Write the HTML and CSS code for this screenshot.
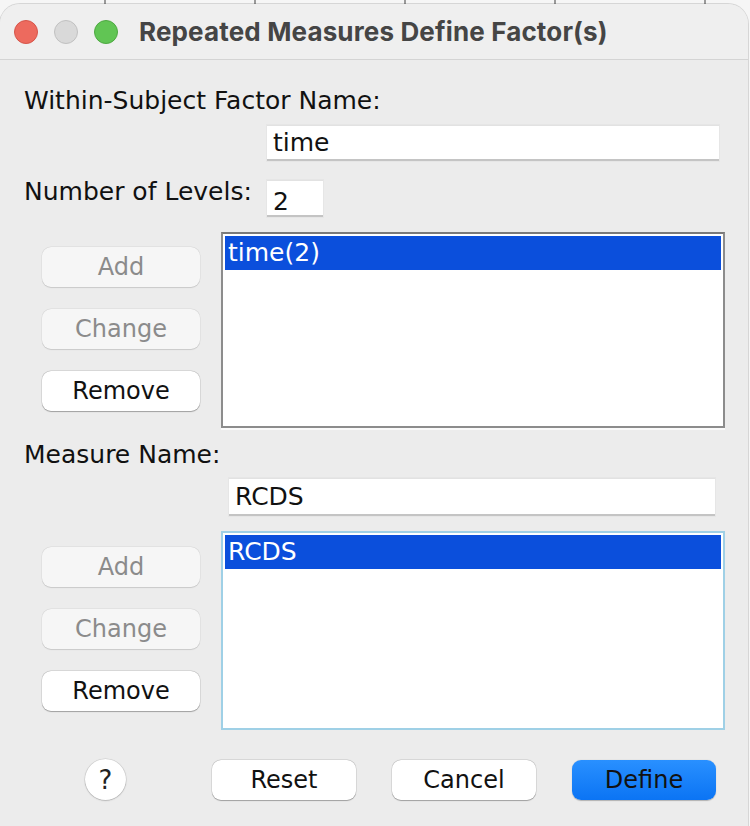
FILE: index.html
```html
<!DOCTYPE html>
<html>
<head>
<meta charset="utf-8">
<link rel="stylesheet" href="styles.css">
</head>
<body>
<div class="window">
  <div class="titlebar">
    <span class="light red"></span>
    <span class="light grey"></span>
    <span class="light green"></span>
    <span class="title">Repeated Measures Define Factor(s)</span>
  </div>
  <div class="content">
    <div class="label l1">Within-Subject Factor Name:</div>
    <div class="field f-factor">time</div>
    <div class="levels-row">
      <div class="label levels-label">Number of Levels:</div>
      <div class="field f-levels">2</div>
    </div>
    <div class="section s1">
      <div class="btn-col">
        <div class="btn disabled">Add</div>
        <div class="btn disabled">Change</div>
        <div class="btn">Remove</div>
      </div>
      <div class="list list-grey">
        <div class="row-sel">time(2)</div>
      </div>
    </div>
    <div class="label l2">Measure Name:</div>
    <div class="field f-measure">RCDS</div>
    <div class="section s2">
      <div class="btn-col">
        <div class="btn disabled">Add</div>
        <div class="btn disabled">Change</div>
        <div class="btn">Remove</div>
      </div>
      <div class="list list-blue">
        <div class="row-sel">RCDS</div>
      </div>
    </div>
    <div class="bottom">
      <div class="help">?</div>
      <div class="btn wide b-reset">Reset</div>
      <div class="btn wide">Cancel</div>
      <div class="btn wide primary">Define</div>
    </div>
  </div>
</div>
</body>
</html>
```
FILE: styles.css
```css
html, body {
  margin: 0;
  padding: 0;
}
body {
  width: 750px;
  height: 826px;
  overflow: hidden;
  background-color: #f6f6f6;
  background-image: repeating-linear-gradient(90deg, transparent 0, transparent 104px, #9a9a9a 104px, #9a9a9a 106px, transparent 106px, transparent 150px);
  background-size: 750px 6px;
  background-repeat: no-repeat;
  font-family: "DejaVu Sans", sans-serif;
}
.window {
  margin-top: 4px;
  width: 748px;
  height: 822px;
  background: #ececec;
  border-radius: 20px 20px 0 0;
  box-shadow: 0 0 0 1px rgba(0,0,0,0.13);
  overflow: hidden;
}
.titlebar {
  height: 55px;
  background: #efefef;
  border-bottom: 1px solid #d4d4d4;
  display: flex;
  align-items: center;
  padding-left: 14px;
}
.light {
  width: 24px;
  height: 24px;
  border-radius: 50%;
  box-sizing: border-box;
  margin-right: 16px;
}
.red { background: #ed6a5e; border: 1px solid #d5554a; }
.grey { background: #d9d9d9; border: 1px solid #c0c0c0; }
.green { background: #61c554; border: 1px solid #4ea842; margin-right: 21px; }
.title {
  font-family: "Inter", "Liberation Sans", sans-serif;
  font-weight: 700;
  font-size: 26px;
  color: #454545;
  letter-spacing: 0.15px;
}
.content {
  padding-left: 24px;
}
.label {
  font-size: 25px;
  line-height: 30px;
  color: #111;
  white-space: nowrap;
}
.l1 { margin-top: 26px; }
.field {
  background: #fff;
  box-sizing: border-box;
  font-size: 25px;
  color: #111;
  padding-left: 6px;
  border-top: 1px solid #e2e2e2;
  border-bottom: 2px solid #c4c4c4;
  box-shadow: 0 0 0 1px #e6e6e6;
  display: flex;
  align-items: center;
}
.f-factor {
  margin-top: 9px;
  margin-left: 243px;
  width: 452px;
  height: 36px;
}
.levels-row {
  display: flex;
  align-items: flex-start;
  margin-top: 19px;
}
.levels-label {
  width: 243px;
  margin-top: -3px;
}
.f-levels {
  width: 56px;
  height: 37px;
  padding-top: 6px;
}
.section {
  display: flex;
  margin-top: 15px;
}
.btn-col {
  margin-left: 18px;
  width: 158px;
  display: flex;
  flex-direction: column;
  gap: 22px;
  padding-top: 15px;
}
.s2 .btn-col { padding-top: 16px; }
.btn {
  height: 40px;
  box-sizing: border-box;
  border-radius: 9px;
  background: #fff;
  box-shadow: 0 0.5px 1px rgba(0,0,0,0.28), 0 0 0 0.5px rgba(0,0,0,0.12);
  display: flex;
  align-items: center;
  justify-content: center;
  font-size: 24px;
  color: #111;
}
.btn.disabled {
  background: #f6f6f6;
  color: #8b8b8b;
  box-shadow: 0 0.5px 1px rgba(0,0,0,0.12), 0 0 0 0.5px rgba(0,0,0,0.06);
}
.list {
  margin-left: 21px;
  width: 504px;
  box-sizing: border-box;
  background: #fff;
  padding: 2px;
}
.list-grey {
  height: 196px;
  border: 2px solid #8c8c8c;
  border-top-color: #7a7a7a;
  box-shadow: 0 2px 0 #fafafa;
}
.list-blue {
  height: 199px;
  border: 2px solid #9fd0e6;
}
.row-sel {
  height: 34px;
  background: #0b4fdc;
  color: #fff;
  font-size: 25px;
  line-height: 34px;
  padding-left: 3px;
}
.l2 { margin-top: 12px; }
.f-measure {
  margin-top: 8px;
  margin-left: 205px;
  width: 486px;
  height: 38px;
}
.bottom {
  display: flex;
  align-items: center;
  margin-top: 29px;
}
.help {
  margin-left: 61px;
  width: 41px;
  height: 41px;
  border-radius: 50%;
  background: #fff;
  box-shadow: 0 0.5px 1.5px rgba(0,0,0,0.3), 0 0 0 0.5px rgba(0,0,0,0.1);
  display: flex;
  align-items: center;
  justify-content: center;
  font-size: 26px;
  color: #222;
}
.wide {
  width: 144px;
  margin-left: 36px;
}
.b-reset { margin-left: 86px; }
.primary {
  background: linear-gradient(#2990ff, #0b74f4);
  box-shadow: 0 0.5px 1px rgba(0,0,0,0.25);
  color: #111;
}
```
